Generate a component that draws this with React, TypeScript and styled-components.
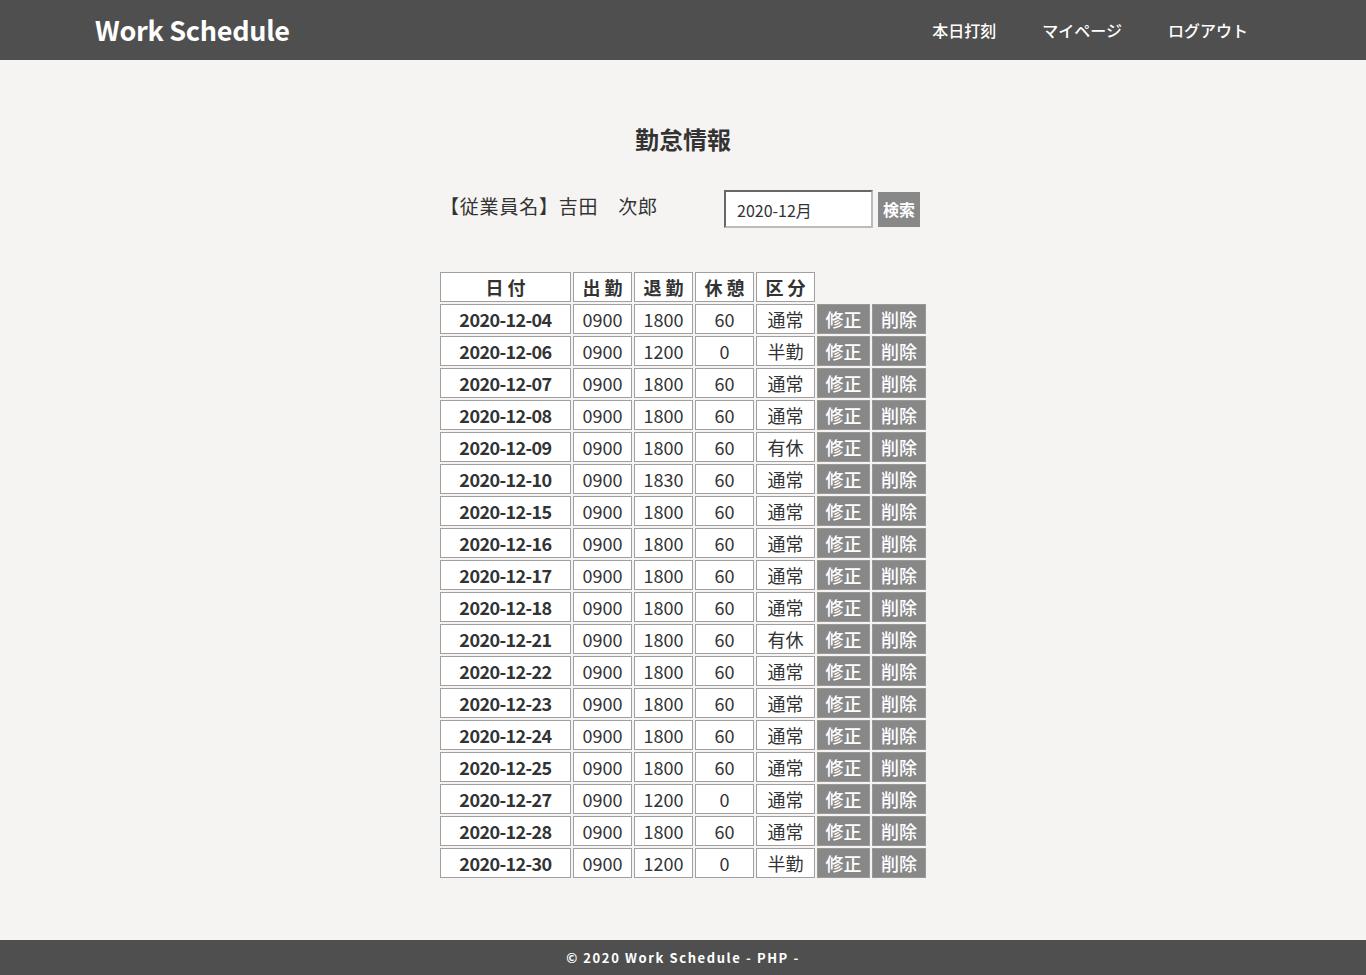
import React from "react";
import styled, { createGlobalStyle } from "styled-components";

const Global = createGlobalStyle`
  html, body { margin: 0; padding: 0; }
  body {
    background: #f5f4f2;
    font-family: "Noto Sans CJK JP", "Noto Sans", sans-serif;
    color: #333;
  }
  #root { min-height: 100vh; display: flex; flex-direction: column; }
`;

const Header = styled.header`
  height: 60px;
  background: #4f4f4f;
  display: flex;
  align-items: center;
  justify-content: space-between;
  padding: 0 118px 0 95px;
  box-sizing: border-box;
`;

const Logo = styled.h1`
  margin: 0;
  color: #fff;
  font-size: 27px;
  font-weight: 700;
  letter-spacing: -0.3px;
  line-height: 1;
  padding-bottom: 1px;
`;

const Nav = styled.nav`
  display: flex;
  gap: 46px;
  padding-bottom: 1px;
`;

const NavLink = styled.a`
  color: #fff;
  font-size: 16px;
  font-weight: 500;
  text-decoration: none;
`;

const Main = styled.main`
  flex: 1;
  display: flex;
  flex-direction: column;
  align-items: center;
  padding-top: 60px;
`;

const Title = styled.h2`
  margin: 0;
  font-size: 24px;
  font-weight: 700;
  line-height: 38px;
  color: #333;
`;

const SearchRow = styled.div`
  width: 486px;
  display: flex;
  align-items: center;
  margin-top: 32px;
`;

const EmpName = styled.div`
  font-size: 19px;
  line-height: 30px;
  width: 284px;
  margin-top: -6px;
  letter-spacing: 0.8px;
`;

const Input = styled.input`
  width: 149px;
  height: 38px;
  box-sizing: border-box;
  border: 2px inset #bbb;
  background: #fff;
  font-family: inherit;
  font-size: 16px;
  color: #333;
  padding: 2px 11px 0;
`;

const SearchBtn = styled.button`
  margin-left: 5px;
  width: 42px;
  height: 35px;
  border: none;
  background: #888;
  color: #fff;
  font-family: inherit;
  font-size: 16px;
  font-weight: 700;
  padding: 0;
`;

const Table = styled.table`
  margin-top: 42px;
  margin-bottom: 60px;
  border-collapse: separate;
  border-spacing: 2px;
`;

const Th = styled.th<{ w: number }>`
  width: ${(p) => p.w}px;
  height: 30px;
  box-sizing: border-box;
  background: #fff;
  border: 1px solid #a0a0a0;
  font-size: 18px;
  font-weight: 700;
  letter-spacing: 4px;
  padding: 0 0 0 4px;
  line-height: 1;
  color: #333;
`;

const EmptyTh = styled.th`
  border: none;
  padding: 0;
`;

const Td = styled.td<{ bold?: boolean }>`
  height: 30px;
  box-sizing: border-box;
  background: #fff;
  border: 1px solid #a0a0a0;
  text-align: center;
  font-size: 18px;
  font-weight: ${(p) => (p.bold ? 700 : 400)};
  letter-spacing: ${(p) => (p.bold ? "-0.6px" : "0")};
  padding: 0;
  line-height: 1;
  color: #333;
`;

const BtnTd = styled.td<{ w: number }>`
  width: ${(p) => p.w}px;
  height: 30px;
  box-sizing: border-box;
  background: #888;
  border: 1px solid #999;
  text-align: center;
  padding: 1px 0 0;
`;

const ActBtn = styled.button`
  border: none;
  background: transparent;
  color: #fff;
  font-family: inherit;
  font-size: 18px;
  font-weight: 500;
  padding: 0;
  line-height: 1;
`;

const Footer = styled.footer`
  height: 35px;
  background: #4f4f4f;
  display: flex;
  align-items: center;
  justify-content: center;
  color: #fff;
  font-size: 13px;
  font-weight: 700;
  letter-spacing: 1.6px;
`;

const rows: [string, string, string, string, string][] = [
  ["2020-12-04", "0900", "1800", "60", "通常"],
  ["2020-12-06", "0900", "1200", "0", "半勤"],
  ["2020-12-07", "0900", "1800", "60", "通常"],
  ["2020-12-08", "0900", "1800", "60", "通常"],
  ["2020-12-09", "0900", "1800", "60", "有休"],
  ["2020-12-10", "0900", "1830", "60", "通常"],
  ["2020-12-15", "0900", "1800", "60", "通常"],
  ["2020-12-16", "0900", "1800", "60", "通常"],
  ["2020-12-17", "0900", "1800", "60", "通常"],
  ["2020-12-18", "0900", "1800", "60", "通常"],
  ["2020-12-21", "0900", "1800", "60", "有休"],
  ["2020-12-22", "0900", "1800", "60", "通常"],
  ["2020-12-23", "0900", "1800", "60", "通常"],
  ["2020-12-24", "0900", "1800", "60", "通常"],
  ["2020-12-25", "0900", "1800", "60", "通常"],
  ["2020-12-27", "0900", "1200", "0", "通常"],
  ["2020-12-28", "0900", "1800", "60", "通常"],
  ["2020-12-30", "0900", "1200", "0", "半勤"],
];

export default function App() {
  return (
    <>
      <Global />
      <Header>
        <Logo>Work Schedule</Logo>
        <Nav>
          <NavLink href="#">本日打刻</NavLink>
          <NavLink href="#">マイページ</NavLink>
          <NavLink href="#">ログアウト</NavLink>
        </Nav>
      </Header>
      <Main>
        <Title>勤怠情報</Title>
        <SearchRow>
          <EmpName>【従業員名】吉田　次郎</EmpName>
          <Input defaultValue="2020-12月" />
          <SearchBtn>検索</SearchBtn>
        </SearchRow>
        <Table>
          <thead>
            <tr>
              <Th w={131}>日付</Th>
              <Th w={59}>出勤</Th>
              <Th w={59}>退勤</Th>
              <Th w={59}>休憩</Th>
              <Th w={59}>区分</Th>
              <EmptyTh />
              <EmptyTh />
            </tr>
          </thead>
          <tbody>
            {rows.map((r) => (
              <tr key={r[0]}>
                <Td bold>{r[0]}</Td>
                <Td>{r[1]}</Td>
                <Td>{r[2]}</Td>
                <Td>{r[3]}</Td>
                <Td>{r[4]}</Td>
                <BtnTd w={53}>
                  <ActBtn>修正</ActBtn>
                </BtnTd>
                <BtnTd w={54}>
                  <ActBtn>削除</ActBtn>
                </BtnTd>
              </tr>
            ))}
          </tbody>
        </Table>
      </Main>
      <Footer>© 2020 Work Schedule - PHP -</Footer>
    </>
  );
}
